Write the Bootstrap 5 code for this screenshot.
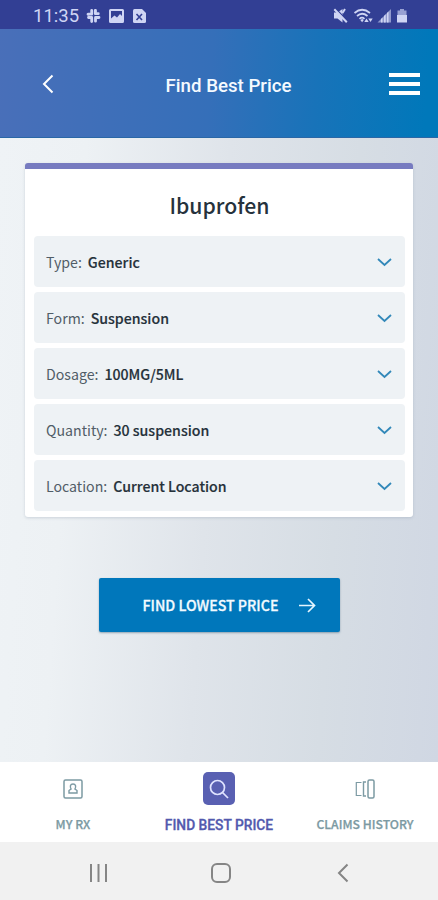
<!DOCTYPE html>
<html lang="en">
<head>
<meta charset="utf-8">
<meta name="viewport" content="width=device-width, initial-scale=1">
<title>Find Best Price</title>
<link href="https://cdn.jsdelivr.net/npm/bootstrap@5.3.0/dist/css/bootstrap.min.css" rel="stylesheet">
<style>
body{font-family:"Noto Sans CJK SC","Open Sans",sans-serif;height:900px;overflow:hidden}
svg{display:block;flex:none;fill:none}
.statusbar{height:29px;background:#323f94;color:#cfd5f4;padding:2px 30px 0 33px;font:400 18.5px/28px Roboto,sans-serif}
.statusbar .clock{width:53px}
.topbar{height:109px;background:linear-gradient(94deg,#496fb9 0%,#356fb9 48%,#1873b9 72%,#0078ba 97%);border-bottom:1px solid #2a67a6;padding:2px 18px 0 42px}
.topbar .heading{font:500 18.7px/24px Roboto,sans-serif;color:#f5faff;padding:3px 0 0 14px}
.content{height:624px;padding:25px 25px 0;background:linear-gradient(94deg,#eff3f6 0%,#edf1f4 18%,#dfe4ea 48%,#d6dde4 75%,#d0d7e3 100%)}
.drug{height:354px;border-top:6px solid #777bc0;border-radius:3px;padding:0 8px 0 9px;box-shadow:0 1px 3px #8895a855}
.drug h1{font-size:21.2px;line-height:30px;font-weight:500;color:#26323c;margin:0;padding:21px 0 16px}
.option{height:51px;background:#eef2f5;border-radius:4px;padding:2px 13px 0 12px;font-size:14.15px;color:#515d67}
.option b{font-weight:500;color:#25313a;margin-left:6px;-webkit-text-stroke:.15px}
.options{gap:5px}
.find{width:241px;height:54px;margin-top:61px;background:#0077bb;border:0;border-radius:2px;color:#f2faff;font-size:14.2px;font-weight:500;padding:1px 24px 0 44px;box-shadow:0 1px 2px #45698088;-webkit-text-stroke:.3px}
.tabs{height:80px}
.tabs a{color:#7c9aa3;font-weight:500;font-size:12.2px;line-height:18px;text-decoration:none;padding-top:9px;width:146px;-webkit-text-stroke:.25px}
.tabs .active{color:#5259ae;font:500 13.8px/18px Roboto,sans-serif;-webkit-text-stroke:.3px}
.tabs .pic{height:35px;margin-bottom:9px}
.tabs .active .pic{margin-bottom:10px}
.tabs .active .glass{width:32px;height:33px;background:#5960b2;border-radius:5px}
.sysnav{height:58px;background:#f1f1f1;padding:4px 89px 0 89px}
.sysnav .home{margin-right:4px}
</style>
</head>
<body class="d-flex flex-column">
<div class="statusbar d-flex align-items-center">
  <span class="clock">11:35</span>
  <!-- notification icons -->
  <svg width="62" height="16" viewBox="0 0 62 16">
    <path d="M5.700 2.500v3.200M9.500 2.500v1.200M9.500 5.700h2.800M2 6.300h1.200M5.700 9.500H2.500M5.700 13.500v-1.200M9.500 9.700v3.500M12.500 9.500h.500M2.300 6.200h3.400M9.500 9.500h3.300M9.300 2.500v3.200M5.700 9.500v4" stroke="#cfd5f4" stroke-width="2.800" stroke-linecap="round"/>
    <path fill="#cfd5f4" fill-rule="evenodd" d="M24.500 1h12q1.500 0 1.500 1.500v11q0 1.500-1.500 1.500h-12q-1.500 0-1.500-1.500v-11q0-1.500 1.500-1.500zM25 3v7.500l3.500-3 2.500 2 3-3.500 2 2V3z"/>
    <path fill="#cfd5f4" d="M48.500 1h7.500l4 4v8.500q0 1.500-1.500 1.500h-10q-1.500 0-1.500-1.500v-11q0-1.500 1.500-1.500z"/>
    <path d="m50.500 6 5.500 6M56 6l-5.500 6" stroke="#323f94" stroke-width="1.600"/>
  </svg>
  <!-- mute, wifi, signal, battery -->
  <svg class="ms-auto" width="76" height="16" viewBox="0 0 76 16">
    <path fill="#cfd5f4" d="M2 4.500h3.500l5-3.500v13.500l-5-4H2z"/>
    <path d="M3.500 .500 15.500 13" stroke="#323f94" stroke-width="1.500"/>
    <path d="M2.300 1.300 14.800 14.300M13 1l-2.500 4" stroke="#cfd5f4" stroke-width="2"/>
    <path d="M22.500 5q7.500-6.500 15.500 0M25 8q5-4.500 10.500 0M27.500 10.800q2.500-2.300 5 0" stroke="#cfd5f4" stroke-width="1.700"/>
    <path fill="#cfd5f4" d="m28.300 12 2-1 1.500 1-1.700 2.200zM34.500 10.500l-2.200 3.500h4.400zM38.500 14l-2.200-3.500h4.400z"/>
    <path fill="#cfd5f4" opacity=".6" d="M45.500 14.500 59 1v13.500z"/>
    <path fill="#cfd5f4" d="M49 14.500V11l1.500-1.500v5zM52 14.500V8l1.700-1.700v8.200zM55 14.500V5l1.500-1.500v11z"/>
    <path fill="#cfd5f4" opacity=".65" d="M68 1h4v1.500h2.500v5h-9v-5H68z"/>
    <path fill="#cfd5f4" d="M65 7h10v7.500H65z"/>
  </svg>
</div>
<header class="topbar d-flex align-items-center justify-content-between">
  <svg width="12" height="20" viewBox="0 0 12 20"><path d="M10.500 1.500 2 10l8.500 8.500" stroke="#fff" stroke-width="2"/></svg>
  <span class="heading">Find Best Price</span>
  <svg width="31" height="22" viewBox="0 0 31 22"><path d="M0 2h31M0 11h31M0 20h31" stroke="#fff" stroke-width="4"/></svg>
</header>
<main class="content">
  <section class="drug bg-white">
    <h1 class="text-center">Ibuprofen</h1>
    <div class="options d-flex flex-column">
      <div class="option d-flex align-items-center"><span>Type:</span><b>Generic</b><svg class="ms-auto" width="15" height="9" viewBox="0 0 15 9"><path d="m1 1 6.500 6L14 1" stroke="#3288b9" stroke-width="1.800"/></svg></div>
      <div class="option d-flex align-items-center"><span>Form:</span><b>Suspension</b><svg class="ms-auto" width="15" height="9" viewBox="0 0 15 9"><path d="m1 1 6.500 6L14 1" stroke="#3288b9" stroke-width="1.800"/></svg></div>
      <div class="option d-flex align-items-center"><span>Dosage:</span><b>100MG/5ML</b><svg class="ms-auto" width="15" height="9" viewBox="0 0 15 9"><path d="m1 1 6.500 6L14 1" stroke="#3288b9" stroke-width="1.800"/></svg></div>
      <div class="option d-flex align-items-center"><span>Quantity:</span><b>30 suspension</b><svg class="ms-auto" width="15" height="9" viewBox="0 0 15 9"><path d="m1 1 6.500 6L14 1" stroke="#3288b9" stroke-width="1.800"/></svg></div>
      <div class="option d-flex align-items-center"><span>Location:</span><b>Current Location</b><svg class="ms-auto" width="15" height="9" viewBox="0 0 15 9"><path d="m1 1 6.500 6L14 1" stroke="#3288b9" stroke-width="1.800"/></svg></div>
    </div>
  </section>
  <button class="find btn d-flex align-items-center justify-content-between mx-auto"><span>FIND LOWEST PRICE</span>
  <svg width="17" height="15" viewBox="0 0 17 15"><path d="M0 7.500h15.500M9 1l6.500 6.500L9 14" stroke="#e6f6ff" stroke-width="1.700"/></svg></button>
</main>
<nav class="tabs bg-white d-flex text-center">
  <a href="#"><div class="pic d-flex justify-content-center align-items-center">
    <svg width="20" height="20" viewBox="0 0 20 20" stroke="#7c9aa3"><rect x="1" y="1" width="18" height="18" rx="1.500" stroke-width="1.500"/><path d="M6 14v-2.500l2-1.500q-1-1.500-.5-3.500Q8 5 10 5t2.500 1.500q.5 2-.5 3.500l2 1.500V14z" stroke-width="1.400"/></svg>
  </div><span>MY RX</span></a>
  <a href="#" class="active"><div class="pic d-flex justify-content-center align-items-center">
    <div class="glass d-flex justify-content-center align-items-center"><svg width="20" height="20" viewBox="0 0 20 20" stroke="#dfe3ff" stroke-width="1.700"><circle cx="8.500" cy="8.500" r="7"/><path d="m13.500 13.500 5.500 5.500"/></svg></div>
  </div><span>FIND BEST PRICE</span></a>
  <a href="#"><div class="pic d-flex justify-content-center align-items-center">
    <svg width="20" height="20" viewBox="0 0 20 20" stroke="#7c9aa3"><rect x="13" y="1" width="6" height="18" rx="1.500" stroke-width="1.500"/><path d="M11 3H8.500v14H11" stroke-width="1.400"/><path d="M6.500 3.500H1.300v13h5.200" stroke-width="1.200"/></svg>
  </div><span>CLAIMS HISTORY</span></a>
</nav>
<footer class="sysnav d-flex align-items-center justify-content-between">
  <svg width="19" height="20" viewBox="0 0 19 20"><path d="M2 1v18M9.500 1v18M17 1v18" stroke="#858585" stroke-width="2"/></svg>
  <svg class="home" width="20" height="20" viewBox="0 0 20 20"><rect x="1" y="1" width="18" height="18" rx="5" stroke="#858585" stroke-width="2"/></svg>
  <svg width="12" height="20" viewBox="0 0 12 20"><path d="M10.500 1.500 2 10l8.500 8.500" stroke="#858585" stroke-width="2"/></svg>
</footer>
<script src="https://cdn.jsdelivr.net/npm/bootstrap@5.3.0/dist/js/bootstrap.bundle.min.js"></script>
</body>
</html>
